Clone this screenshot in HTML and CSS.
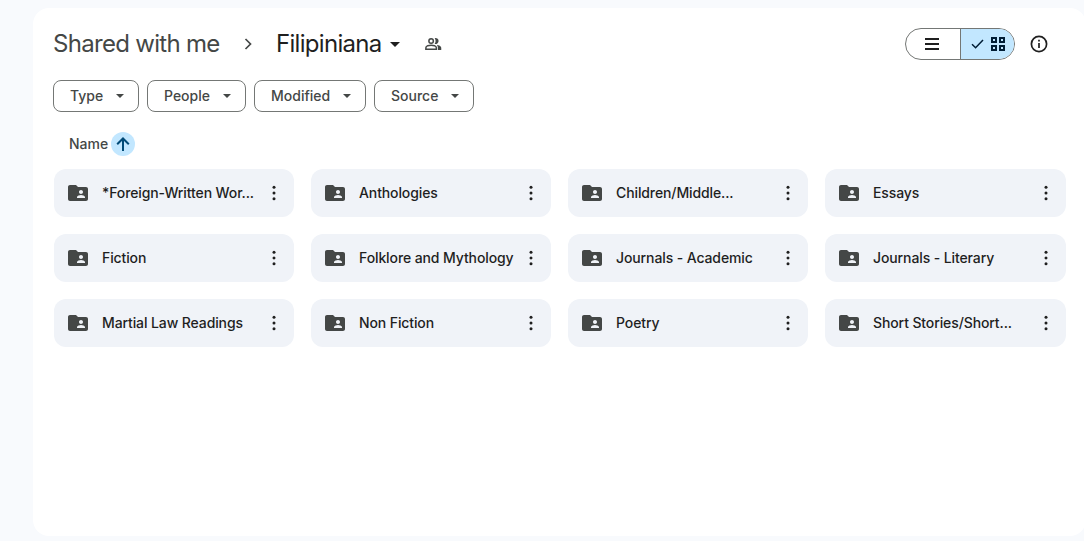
FILE: index.html
```html
<!DOCTYPE html>
<html lang="en">
<head>
    <meta charset="utf-8">
    <title>Filipiniana</title>
    <meta name="viewport" content="width=device-width, initial-scale=1">
    <link rel="stylesheet" href="styles.css">
</head>
<body>
<svg class="sprite" aria-hidden="true">
    <symbol id="folder" viewBox="0 0 24 24">
        <path fill-rule="evenodd" d="M20 6h-8l-2-2H4c-1.100 0-1.990.9-1.990 2L2 18c0 1.100.9 2 2 2h16c1.100 0 2-.9 2-2V8c0-1.100-.9-2-2-2zm-5 3c1.100 0 2 .9 2 2s-.9 2-2 2-2-.9-2-2 .9-2 2-2zm4 8h-8v-1c0-1.330 2.670-2 4-2s4 .67 4 2v1z"/>
    </symbol>
    <symbol id="more" viewBox="0 0 24 24">
        <circle cx="12" cy="5" r="1.800"/>
        <circle cx="12" cy="12" r="1.800"/>
        <circle cx="12" cy="19" r="1.800"/>
    </symbol>
    <symbol id="caret" viewBox="0 0 10 5">
        <path d="M0 0h10L5 5z"/>
    </symbol>
</svg>
<main class="panel">
    <header class="header">
        <nav class="breadcrumb">
            <a class="crumb parent">Shared with me</a>
            <svg class="chevron" viewBox="0 0 8 12"><path d="M1.500 1l5 5-5 5"/></svg>
            <span class="crumb current">Filipiniana</span>
            <svg class="crumb-caret"><use href="#caret"/></svg>
            <svg class="people" viewBox="0 0 24 24">
                <circle cx="9.500" cy="8" r="3"/>
                <path d="M2.500 19v-2c0-2.300 4.200-3.500 7-3.500s7 1.200 7 3.500v2z"/>
                <path class="back" d="M14.200 4.200a4 4 0 1 1 0 7.600c1.700-2.200 1.700-5.400 0-7.600zM17 12.900c3 .5 6 1.800 6 4.100v3h-4.500v-3c0-1.700-.6-3-1.500-4.100z"/>
            </svg>
        </nav>
        <div class="actions">
            <div class="view-toggle">
                <button class="view list" aria-label="List layout">
                    <svg width="14" height="12" viewBox="0 0 14 12"><path d="M0 0h14v2H0zM0 5h14v2H0zM0 10h14v2H0z"/></svg>
                </button>
                <button class="view grid" aria-label="Grid layout">
                    <svg class="check" width="13" height="10" viewBox="0 0 13 10"><path d="M1 5.200l3.600 3.600L12 1"/></svg>
                    <svg class="tiles" width="14" height="14" viewBox="0 0 14 14">
                        <path d="M1 1h4v4H1zM9 1h4v4H9zM1 9h4v4H1zM9 9h4v4H9z"/>
                    </svg>
                </button>
            </div>
            <svg class="info" viewBox="0 0 18 18">
                <circle cx="9" cy="9" r="7.600"/>
                <path d="M9 8v5M9 4.800v1.800"/>
            </svg>
        </div>
    </header>

    <div class="filters">
        <button class="chip type"><span>Type</span><svg><use href="#caret"/></svg></button>
        <button class="chip owner"><span>People</span><svg><use href="#caret"/></svg></button>
        <button class="chip modified"><span>Modified</span><svg><use href="#caret"/></svg></button>
        <button class="chip source"><span>Source</span><svg><use href="#caret"/></svg></button>
    </div>

    <div class="sort">
        <span class="sort-label">Name</span>
        <span class="sort-arrow"><svg width="14" height="14" viewBox="0 0 14 14"><path d="M7 14V2M1.200 7.300L7 1.500l5.800 5.800"/></svg></span>
    </div>

    <section class="folders">
        <div class="folder"><svg class="icon"><use href="#folder"/></svg><span class="name">*Foreign-Written Wor...</span><svg class="more"><use href="#more"/></svg></div>
        <div class="folder"><svg class="icon"><use href="#folder"/></svg><span class="name">Anthologies</span><svg class="more"><use href="#more"/></svg></div>
        <div class="folder"><svg class="icon"><use href="#folder"/></svg><span class="name">Children/Middle...</span><svg class="more"><use href="#more"/></svg></div>
        <div class="folder"><svg class="icon"><use href="#folder"/></svg><span class="name">Essays</span><svg class="more"><use href="#more"/></svg></div>
        <div class="folder"><svg class="icon"><use href="#folder"/></svg><span class="name">Fiction</span><svg class="more"><use href="#more"/></svg></div>
        <div class="folder"><svg class="icon"><use href="#folder"/></svg><span class="name">Folklore and Mythology</span><svg class="more"><use href="#more"/></svg></div>
        <div class="folder"><svg class="icon"><use href="#folder"/></svg><span class="name">Journals - Academic</span><svg class="more"><use href="#more"/></svg></div>
        <div class="folder"><svg class="icon"><use href="#folder"/></svg><span class="name">Journals - Literary</span><svg class="more"><use href="#more"/></svg></div>
        <div class="folder"><svg class="icon"><use href="#folder"/></svg><span class="name">Martial Law Readings</span><svg class="more"><use href="#more"/></svg></div>
        <div class="folder"><svg class="icon"><use href="#folder"/></svg><span class="name">Non Fiction</span><svg class="more"><use href="#more"/></svg></div>
        <div class="folder"><svg class="icon"><use href="#folder"/></svg><span class="name">Poetry</span><svg class="more"><use href="#more"/></svg></div>
        <div class="folder"><svg class="icon"><use href="#folder"/></svg><span class="name">Short Stories/Short...</span><svg class="more"><use href="#more"/></svg></div>
    </section>
</main>
</body>
</html>
```

FILE: styles.css
```css
:root {
    --page: #f8fafd;
    --surface: #f0f3f8;
    --text: #1f1f1f;
    --muted: #444746;
    --outline: #747775;
    --selected: #c2e7ff;
    --on-selected: #001d35;
}

*, *:before, *:after {
    box-sizing: border-box;
}

body {
    margin: 0;
    height: 541px;
    padding: 8px 0 5px 33px;
    overflow: hidden;
    background-color: var(--page);
    color: var(--text);
    font-family: Inter, "Liberation Sans", sans-serif;
    font-size: 14px;
}

svg {
    display: block;
    flex: none;
    fill: currentColor;
}

button {
    font: inherit;
    color: inherit;
    background: none;
    cursor: pointer;
}

.sprite {
    display: none;
}

.panel {
    width: 1053px;
    height: 528px;
    padding: 16px 20px 0;
    border-radius: 16px;
    background-color: #fff;
}

.header {
    display: flex;
    align-items: center;
    justify-content: space-between;
    height: 40px;
    padding-right: 18px;
}

.breadcrumb {
    display: flex;
    align-items: center;
    font-size: 24px;
    line-height: 32px;
    white-space: nowrap;
}

.crumb {
    letter-spacing: -0.7px;
}

.parent {
    width: 167px;
    color: var(--muted);
}

.chevron {
    width: 8px;
    height: 12px;
    margin: 0 24px;
    color: var(--muted);
}

.chevron path {
    fill: none;
    stroke: currentColor;
    stroke-width: 1.7;
}

.current {
    width: 105px;
}

.crumb-caret {
    width: 10px;
    height: 5px;
    margin: 1px 0 0 9px;
}

.people {
    width: 20px;
    height: 18px;
    margin-left: 23px;
    color: var(--muted);
}

.people circle,
.people path {
    fill: none;
    stroke: currentColor;
    stroke-width: 2;
}

.people .back {
    fill: currentColor;
    stroke: none;
}

.actions {
    display: flex;
    align-items: center;
    gap: 15px;
}

.view-toggle {
    display: flex;
    width: 110px;
    height: 32px;
    border: 1px solid var(--outline);
    border-radius: 16px;
    overflow: hidden;
}

.view {
    display: flex;
    align-items: center;
    justify-content: center;
    padding: 0;
    border: 0;
}

.list {
    width: 54px;
    padding-right: 2px;
}

.grid {
    flex: 1;
    gap: 7px;
    border-left: 1px solid var(--outline);
    background-color: var(--selected);
    color: var(--on-selected);
}

.check path {
    fill: none;
    stroke: currentColor;
    stroke-width: 1.5;
}

.tiles path {
    fill: none;
    stroke: currentColor;
    stroke-width: 2;
}

.info {
    width: 18px;
    height: 18px;
}

.info circle,
.info path {
    fill: none;
    stroke: currentColor;
    stroke-width: 1.7;
}

.filters {
    display: flex;
    gap: 8px;
    margin-top: 16px;
}

.chip {
    display: flex;
    align-items: center;
    justify-content: space-between;
    height: 32px;
    padding: 0 14px 0 16px;
    border: 1px solid var(--outline);
    border-radius: 8px;
    color: var(--muted);
    font-weight: 450;
}

.chip span {
    padding-bottom: 2px;
}

.chip svg {
    width: 8px;
    height: 4px;
}

.type {
    width: 86px;
}

.owner {
    width: 99px;
}

.modified {
    width: 112px;
}

.source {
    width: 100px;
}

.sort {
    display: flex;
    align-items: center;
    gap: 4px;
    height: 24px;
    margin: 20px 0 13px 16px;
    color: var(--muted);
    font-weight: 450;
}

.sort-label {
    width: 38px;
    padding-bottom: 2px;
}

.sort-arrow {
    display: flex;
    align-items: center;
    justify-content: center;
    width: 24px;
    height: 24px;
    border-radius: 50%;
    background-color: var(--selected);
    color: #004a77;
}

.sort-arrow path {
    fill: none;
    stroke: currentColor;
    stroke-width: 2;
}

.folders {
    display: grid;
    grid-template-columns: repeat(3, 240px) 241px;
    gap: 17px;
    margin-left: 1px;
}

.folder {
    display: flex;
    align-items: center;
    height: 48px;
    padding: 0 8px 0 12px;
    border-radius: 12px;
    background-color: var(--surface);
    font-weight: 450;
}

.icon {
    width: 24px;
    height: 24px;
    color: var(--muted);
}

.name {
    flex: 1;
    margin-left: 12px;
    padding-bottom: 2px;
    letter-spacing: -0.11px;
    white-space: nowrap;
}

.more {
    width: 24px;
    height: 20px;
}
```
